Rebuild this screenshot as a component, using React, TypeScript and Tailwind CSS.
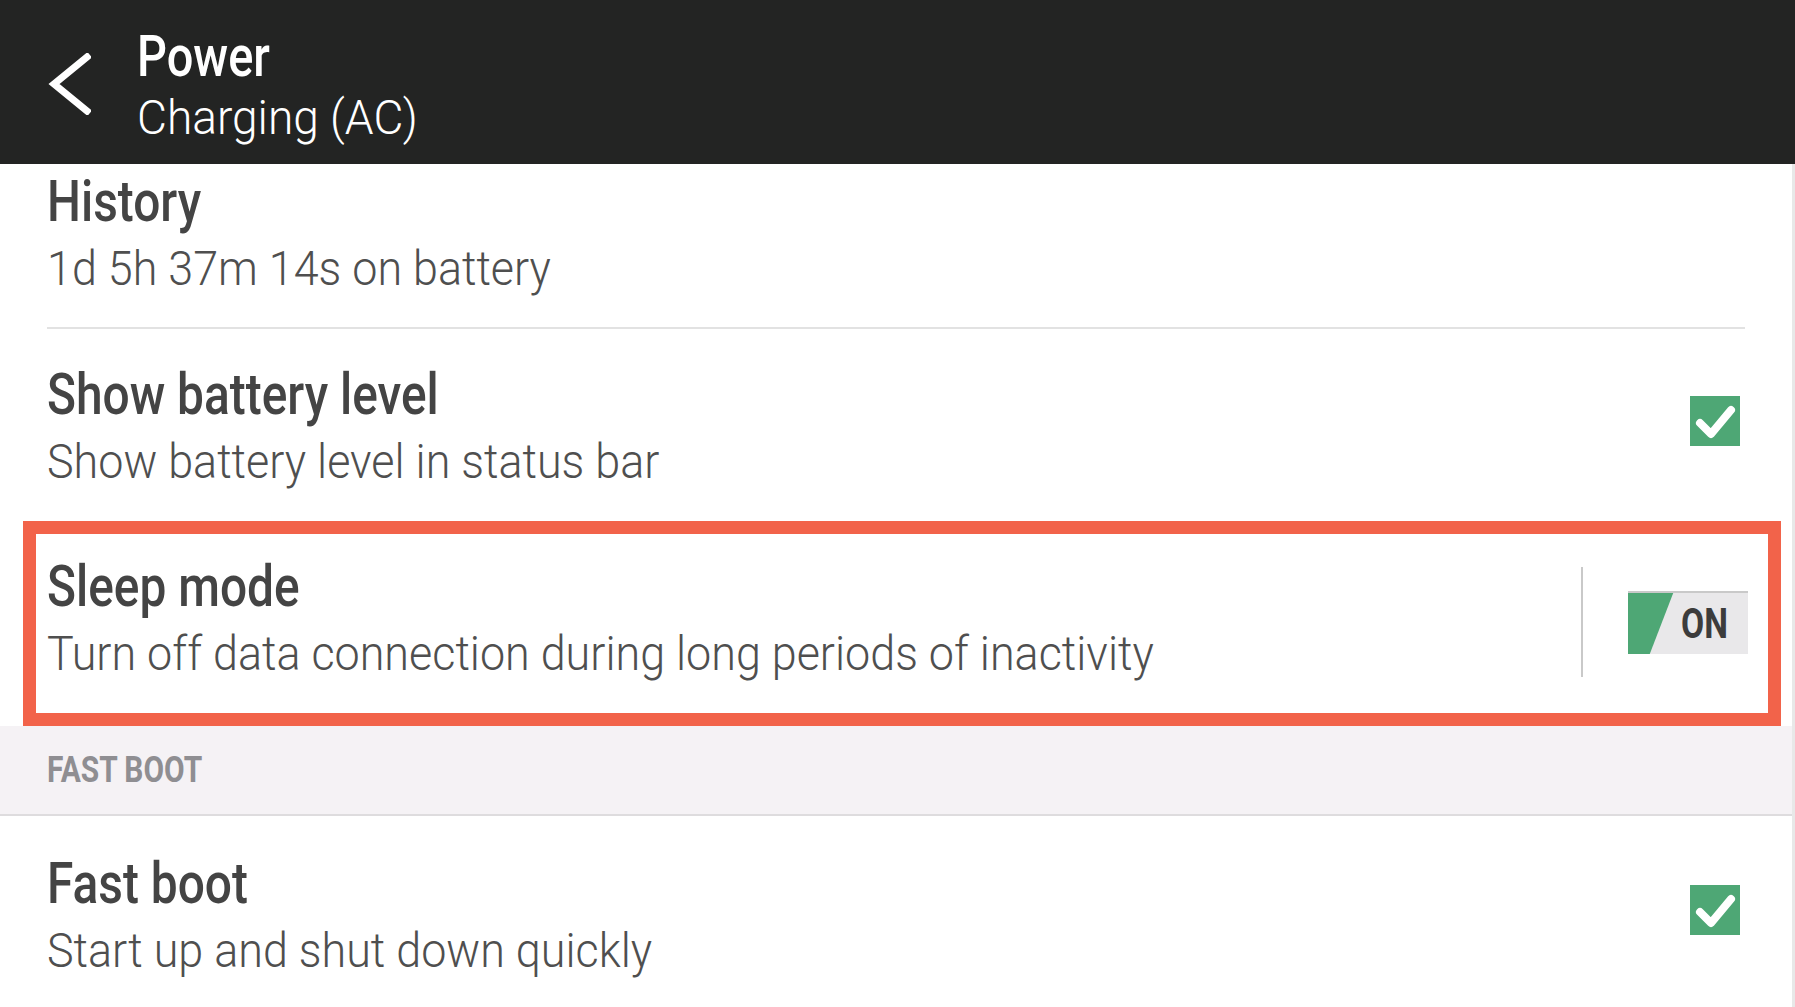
import { ReactNode } from "react";

const FONT = "font-['Roboto','Liberation_Sans',sans-serif]";

function Squeeze({ children, className = "" }: { children: ReactNode; className?: string }) {
  // Roboto Condensed is not available, so the regular face is narrowed
  return (
    <span className={`inline-block origin-left whitespace-nowrap ${className}`}>{children}</span>
  );
}

function Title({ children }: { children: ReactNode }) {
  return (
    <div className="text-[58px] leading-[58px] font-medium text-[#444444]">
      <Squeeze className="scale-x-[0.825]">{children}</Squeeze>
    </div>
  );
}

function Subtitle({ children }: { children: ReactNode }) {
  return (
    <div className="mt-[15px] text-[48px] leading-[48px] font-light text-[#4f4f4f]">
      <Squeeze className="scale-x-[0.935]">{children}</Squeeze>
    </div>
  );
}

function CheckBox() {
  return (
    <div className="w-[50px] h-[50px] bg-[#4ea775] flex items-center justify-center shrink-0">
      <svg width="50" height="50" viewBox="0 0 50 50">
        <polyline
          points="10,27 21,38 41,14"
          fill="none"
          stroke="#ffffff"
          strokeWidth="8"
          strokeLinecap="round"
          strokeLinejoin="round"
        />
      </svg>
    </div>
  );
}

function Toggle() {
  return (
    <div className="relative w-[120px] h-[63px] bg-[#e9e8ea] border-t-2 border-[#c9c9c9] overflow-hidden shrink-0">
      <svg className="absolute left-0 top-[-2px]" width="48" height="65" viewBox="0 0 48 65">
        <polygon points="0,0 46,0 21,65 0,65" fill="#4ea775" />
        <line x1="0" y1="1" x2="46" y2="1" stroke="#2f7d52" strokeWidth="2" />
      </svg>
      <div className="absolute left-[53px] top-0 h-full flex items-center text-[42px] leading-none font-bold text-[#3c3c3c]">
        <Squeeze className="scale-x-[0.8]">ON</Squeeze>
      </div>
    </div>
  );
}

export default function App() {
  return (
    <div className={`w-[1795px] h-[1007px] overflow-hidden bg-white flex flex-col ${FONT}`}>
      <header className="h-[164px] shrink-0 bg-[#232423] flex">
        <div className="w-[137px] shrink-0 pl-[47px] pt-[53px]">
          <svg width="44" height="62" viewBox="0 0 44 62">
            <polyline
              points="40,4 7,31 40,58"
              fill="none"
              stroke="#ffffff"
              strokeWidth="7"
              strokeLinecap="square"
            />
          </svg>
        </div>
        <div className="pt-[27px] text-white">
          <div className="text-[58px] leading-[58px] font-medium">
            <Squeeze className="scale-x-[0.81]">Power</Squeeze>
          </div>
          <div className="mt-[9px] text-[48px] leading-[48px] font-light">
            <Squeeze className="scale-x-[0.96]">Charging (AC)</Squeeze>
          </div>
        </div>
      </header>

      <main className="flex-1 flex flex-col border-r-[3px] border-[#e8e8e8]">
        <section className="h-[163px] shrink-0 px-[47px] pt-[8px]">
          <Title>History</Title>
          <Subtitle>1d 5h 37m 14s on battery</Subtitle>
        </section>
        <div className="mx-[47px] h-[2px] bg-[#e2e2e2]" />

        <section className="h-[192px] shrink-0 pl-[47px] pr-[52px] flex items-start justify-between">
          <div className="pt-[36px]">
            <Title>Show battery level</Title>
            <Subtitle>Show battery level in status bar</Subtitle>
          </div>
          <div className="pt-[67px]">
            <CheckBox />
          </div>
        </section>

        <section className="h-[205px] shrink-0 ml-[23px] mr-[11px] border-[13px] border-[#f2634a] flex items-start">
          <div className="flex-1 pl-[11px] pt-[23px]">
            <Title>Sleep mode</Title>
            <Subtitle>Turn off data connection during long periods of inactivity</Subtitle>
          </div>
          <div className="mt-[33px] w-[2px] h-[110px] bg-[#c9c9c9]" />
          <div className="pl-[45px] pr-[20px] pt-[57px]">
            <Toggle />
          </div>
        </section>

        <section className="h-[90px] shrink-0 bg-[#f5f2f5] border-b-2 border-[#dedcde] px-[47px] pt-[26px]">
          <div className="text-[36px] leading-[36px] font-bold text-[#8f8e92]">
            <Squeeze className="scale-x-[0.83]">FAST BOOT</Squeeze>
          </div>
        </section>

        <section className="flex-1 pl-[47px] pr-[52px] flex items-start justify-between">
          <div className="pt-[38px]">
            <Title>Fast boot</Title>
            <Subtitle>Start up and shut down quickly</Subtitle>
          </div>
          <div className="pt-[69px]">
            <CheckBox />
          </div>
        </section>
      </main>
    </div>
  );
}
